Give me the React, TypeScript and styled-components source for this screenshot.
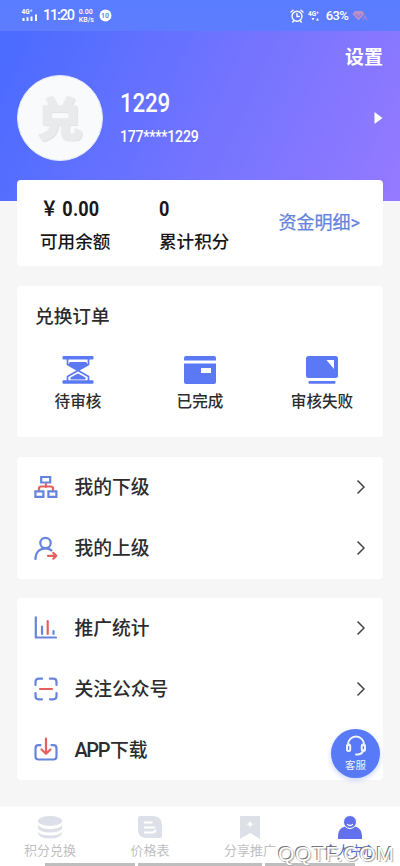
import React from "react";
import styled, { createGlobalStyle } from "styled-components";

const Global = createGlobalStyle`
  * { box-sizing: border-box; }
  body { margin: 0; background: #f6f6f6; }
`;

const Screen = styled.div`
  width: 400px;
  height: 866px;
  overflow: hidden;
  display: flex;
  flex-direction: column;
  background: #f6f6f6;
  color: #2c2c2e;
  font-family: Roboto, "Noto Sans CJK SC", sans-serif;
  white-space: nowrap;
`;

const StatusBar = styled.div`
  flex: none;
  height: 31px;
  padding: 0 32px 0 21px;
  display: flex;
  align-items: center;
  justify-content: space-between;
  color: #fff;
  background: linear-gradient(180deg, #5a7cff, #5d7dfe);
`;

const StatusGroup = styled.div<{ $gap: number }>`
  display: flex;
  align-items: center;
  gap: ${(p) => p.$gap}px;
`;

const Clock = styled.span`
  font-size: 14.5px;
  font-weight: 500;
  letter-spacing: -1.2px;
  line-height: 31px;
`;

const Battery = styled.span`
  font-size: 13px;
  font-weight: 500;
  letter-spacing: -0.7px;
  line-height: 31px;
`;

const TinyStack = styled.div`
  display: flex;
  flex-direction: column;
  font-size: 7px;
  font-weight: 500;
  line-height: 8px;
`;

const Header = styled.header`
  flex: none;
  height: 170px;
  padding: 15px 17px 0;
  color: #fff;
  background: linear-gradient(115deg, #4c6cff 5%, #6f73ff 48%, #957aff 100%);
`;

const Settings = styled.div`
  text-align: right;
  font-size: 19px;
  font-weight: 700;
  line-height: 22px;
  height: 22px;
  margin-top: 1px;
`;

const Profile = styled.div`
  display: flex;
  align-items: center;
  height: 86px;
  margin-top: 6px;
`;

const Avatar = styled.div`
  width: 86px;
  height: 86px;
  border-radius: 50%;
  border: 1px solid #dfe7ff;
  background: #f9fafb;
  color: #e9eaec;
  display: flex;
  align-items: center;
  justify-content: center;
  padding-top: 4px;
  font-size: 46px;
  font-weight: 900;
  line-height: 50px;
  -webkit-text-stroke: 1px #e9eaec;
  text-shadow: 1px 1px 1px #d9dadd, -1px -1px 1px #f2f2f2;
`;

const Identity = styled.div`
  flex: 1;
  margin-left: 17px;
`;

const Name = styled.div`
  font-size: 26px;
  font-weight: 500;
  letter-spacing: -0.2px;
  line-height: 30px;
  transform: scaleX(0.86);
  transform-origin: left;
`;

const Phone = styled.div`
  margin-top: 5px;
  font-size: 17px;
  font-weight: 500;
  letter-spacing: -0.3px;
  line-height: 26px;
  transform: scaleX(0.83);
  transform-origin: left;
`;

const Body = styled.main`
  flex: none;
  height: 626px;
  margin-top: -21px;
  padding: 0 17px;
  display: flex;
  flex-direction: column;
`;

const Card = styled.section<{ $h: number; $gap?: number }>`
  flex: none;
  height: ${(p) => p.$h}px;
  margin-top: ${(p) => p.$gap ?? 0}px;
  border-radius: 4px;
  background: #fff;
`;

const Balance = styled(Card)`
  display: grid;
  grid-template-columns: 119px 1fr auto;
  padding: 16px 23px 0 23px;
  color: #171717;
`;

const Amount = styled.div`
  font-size: 21px;
  font-weight: 700;
  letter-spacing: 0.2px;
  line-height: 27px;
  height: 27px;
  transform: scaleX(0.86);
  transform-origin: left;
`;

const Yen = styled.span`
  display: inline-block;
  width: 25px;
  font-size: 20px;
  margin-left: 1px;
  line-height: 20px;
`;

const AmountLabel = styled.div`
  margin-top: 6px;
  font-size: 17.6px;
  font-weight: 500;
  line-height: 26px;
`;

const Detail = styled.a`
  margin-top: 14px;
  font-size: 18px;
  line-height: 26px;
  font-weight: 400;
  -webkit-text-stroke: 0.25px currentColor;
  color: #6483dc;
`;

const CardTitle = styled.h2`
  margin: 0;
  padding: 17px 18px 0;
  font-size: 18.7px;
  font-weight: 500;
  line-height: 28px;
`;

const Orders = styled.div`
  display: grid;
  grid-template-columns: repeat(3, 1fr);
  margin-top: 23px;
`;

const Order = styled.div`
  display: flex;
  flex-direction: column;
  align-items: center;
  font-size: 15.6px;
  font-weight: 500;
  line-height: 24px;
  svg { display: block; margin-bottom: 4px; }
`;

const Row = styled.div`
  height: 60.6px;
  display: flex;
  align-items: center;
  padding: 0 17px;
  font-size: 18.8px;
  font-weight: 500;
  line-height: 28px;
  svg { flex: none; display: block; }
`;

const RowLabel = styled.span`
  flex: 1;
  margin-left: 16.5px;
  padding-top: 2px;
`;

const Latin = styled.span`
  letter-spacing: -1.4px;
  margin-right: 1px;
  font-size: 20px;
`;

const Service = styled.button`
  position: absolute;
  left: 331px;
  top: 729px;
  width: 49px;
  height: 49px;
  padding: 6px 0 0;
  border: 0;
  border-radius: 50%;
  display: flex;
  flex-direction: column;
  align-items: center;
  background: #587af6;
  box-shadow: 0 2px 5px #587af655;
  color: #eef2ff;
  font: 400 10.5px/16px "Noto Sans CJK SC", sans-serif;
`;

const Nav = styled.nav`
  flex: none;
  height: 60px;
  padding-top: 7px;
  display: grid;
  grid-template-columns: repeat(4, 1fr);
  background: #fff;
  border-top: 1px solid #fbfbfb;
`;

const Tab = styled.div<{ $active?: boolean }>`
  display: flex;
  flex-direction: column;
  align-items: center;
  font-size: 13px;
  line-height: 18px;
  color: ${(p) => (p.$active ? "#4c65d8" : "#bfc0c2")};
  svg { display: block; margin-bottom: 2px; }
`;

const HomeBars = styled.div`
  position: absolute;
  left: 45px;
  top: 863px;
  width: 310px;
  height: 3px;
  display: grid;
  grid-template-columns: 90px 124px 90px;
  gap: 3px;
`;

const HomeBar = styled.i`
  background: #bebebe;
`;

const Watermark = styled.div`
  position: absolute;
  left: 278px;
  top: 842px;
  font: 400 21px/23px "Liberation Sans", sans-serif;
  letter-spacing: 0.7px;
  color: #fff;
  white-space: nowrap;
  text-shadow: -1px -1px 0 #777, 1px 1px 1px #aaa;
`;

const BLUE = "#5b79f5";
const LINE = "#6684dc";
const RED = "#e3605f";

const Chevron = () => (
  <svg width="10" height="16" viewBox="0 0 10 16" fill="none" stroke="#454545" strokeWidth="1.5">
    <path d="M1.5 1.5 8 8l-6.5 6.5" />
  </svg>
);

const lineIcons: Record<string, React.ReactNode> = {
  tree: (
    <>
      <path stroke={RED} d="M12 9v3M5 15v-1.5q0-2 2-2h10q2 0 2 2V15" />
      <path strokeLinejoin="miter" d="M7.2 2h9v5.5h-9zM1.4 16.3h8v5.6h-8zM14.4 16.3h8v5.6h-8z" />
    </>
  ),
  person: (
    <>
      <circle cx="11.5" cy="7" r="5.2" />
      <path d="M1.5 23c0-6 3.5-10.5 10-10.6 2.5 0 4.5.8 6 2" />
      <path stroke={RED} d="M14 19.8h8M19.3 16.9l3 2.9-3 2.9" />
    </>
  ),
  chart: (
    <>
      <path d="M1.8 1.3v20.2H22M8 18v-7.500M19.500 18v-3" />
      <path stroke={RED} d="M13.7 18V5" />
    </>
  ),
  scan: (
    <>
      <path d="M1.5 8V5q0-3.3 3.3-3.3H8M16 1.7h3.3q3.2 0 3.2 3.3v3M22.500 16v3q0 3.300-3.200 3.300H16M8 22.300H4.800Q1.500 22.300 1.500 19v-3" />
      <path stroke={RED} d="M6 12h12" />
    </>
  ),
  download: (
    <>
      <path d="M6.500 8.200H4.500q-3 0-3 3v8.300q0 3 3 3h15q3 0 3-3v-8.300q0-3-3-3h-2" />
      <path stroke={RED} d="M12 1.500v15M7.500 12.500l4.500 4.300 4.500-4.300" />
    </>
  ),
};

const LineIcon = ({ name }: { name: string }) => (
  <svg width="24" height="24" viewBox="0 0 24 24" fill="none" stroke={LINE} strokeWidth="2.200" strokeLinecap="round" strokeLinejoin="round">
    {lineIcons[name]}
  </svg>
);

const MenuRow = ({ icon, label, last }: { icon: string; label: React.ReactNode; last?: boolean }) => (
  <Row>
    <LineIcon name={icon} />
    <RowLabel>{label}</RowLabel>
    {!last && <Chevron />}
  </Row>
);

const SignalIcon = () => (
  <svg width="17" height="15" viewBox="0 0 17 15" fill="#fff">
    <text x="0.500" y="5.700" fontSize="6.500" fontWeight="700" fontFamily="Roboto">4G⁺</text>
    <path d="M1.500 10h2v3h-2zM5.500 9.300h2V13h-2zM9.500 8.500h2V13h-2zM14 6.500h2V13h-2z" />
  </svg>
);

const AlarmIcon = () => (
  <svg width="14" height="14" viewBox="0 0 14 14" fill="none" stroke="#fff" strokeWidth="1.400" strokeLinecap="round">
    <circle cx="7" cy="7.300" r="5" />
    <path d="M7 4.500v3h2.300M1 3l2-1.800M13 3l-2-1.800M3.500 12l-.8 1M10.500 12l.8 1" />
  </svg>
);

const DataIcon = () => (
  <svg width="14" height="12" viewBox="0 0 14 12" fill="#fff">
    <text x="0" y="5.600" fontSize="6.500" fontWeight="700" fontFamily="Roboto">4G⁺</text>
    <path d="M3.500 8h3L5 10.500zM8 10.500h3L9.500 8z" />
  </svg>
);

const DiamondIcon = () => (
  <svg width="16" height="12" viewBox="0 0 16 12">
    <path fill="#b98fc8" d="M3 1h7l2.500 3-6 6.500L.500 4z" />
    <path fill="none" stroke="#8375d4" d="M3.500 4 6.500 7l3-3" />
    <path fill="none" stroke="#9a86df" strokeWidth="1.200" d="m11 10 2-4 2 4.500" />
  </svg>
);

export default function App() {
  return (
    <Screen>
      <Global />
      <StatusBar>
        <StatusGroup $gap={5}>
          <SignalIcon />
          <Clock>11:20</Clock>
          <TinyStack>
            <span>0.00</span>
            <span>KB/s</span>
          </TinyStack>
          <svg width="13" height="13" viewBox="0 0 13 13">
            <circle cx="6.500" cy="6.500" r="6" fill="#fff" />
            <text x="2" y="9" fontSize="7" fontWeight="700" fontFamily="Roboto" fill="#6c86ee">10</text>
          </svg>
        </StatusGroup>
        <StatusGroup $gap={4}>
          <AlarmIcon />
          <DataIcon />
          <Battery>63%</Battery>
          <DiamondIcon />
        </StatusGroup>
      </StatusBar>
      <Header>
        <Settings>设置</Settings>
        <Profile>
          <Avatar>兑</Avatar>
          <Identity>
            <Name>1229</Name>
            <Phone>177****1229</Phone>
          </Identity>
          <svg width="9" height="14" viewBox="0 0 9 14">
            <path fill="#fff" d="M.5 1v12L8.500 7z" />
          </svg>
        </Profile>
      </Header>
      <Body>
        <Balance $h={86}>
          <div>
            <Amount><Yen>￥</Yen>0.00</Amount>
            <AmountLabel>可用余额</AmountLabel>
          </div>
          <div>
            <Amount>0</Amount>
            <AmountLabel>累计积分</AmountLabel>
          </div>
          <Detail>资金明细&gt;</Detail>
        </Balance>
        <Card $h={151} $gap={20}>
          <CardTitle>兑换订单</CardTitle>
          <Orders>
            <Order>
              <svg width="32" height="32" viewBox="0 0 32 32" fill={BLUE}>
                <rect x="0.500" y="2" width="31" height="3.600" rx="1" />
                <rect x="0.500" y="26.200" width="31" height="3.600" rx="1" />
                <path d="M8 8h16l2 2.500L16 16 6 10.500zM8.500 25.500v-2L16 19.500l7.500 4v2z" />
                <path fill="none" stroke={BLUE} strokeWidth="1.700" d="M5.500 5v5.500L16 16.500l10.500-6V5M5.500 27v-4.500L16 16.500l10.500 6V27" />
              </svg>
              待审核
            </Order>
            <Order>
              <svg width="32" height="32" viewBox="0 0 32 32" fill={BLUE}>
                <path d="M0 6.500V4q0-2 2-2h28q2 0 2 2v2.500z" />
                <path fillRule="evenodd" d="M0 9.500h32V28q0 2-2 2H2q-2 0-2-2zM17 14v5h10v-5z" />
              </svg>
              已完成
            </Order>
            <Order>
              <svg width="32" height="32" viewBox="0 0 32 32" fill={BLUE}>
                <path fillRule="evenodd" d="M2.500 2h27q2.500 0 2.500 2.500v17q0 2.500-2.500 2.500h-27Q0 24 0 21.500v-17Q0 2 2.500 2zM20.500 6 28 15V6z" />
                <rect x="2.500" y="27" width="27" height="2.800" rx="1" />
              </svg>
              审核失败
            </Order>
          </Orders>
        </Card>
        <Card $h={122} $gap={20}>
          <MenuRow icon="tree" label="我的下级" />
          <MenuRow icon="person" label="我的上级" />
        </Card>
        <Card $h={182} $gap={19}>
          <MenuRow icon="chart" label="推广统计" />
          <MenuRow icon="scan" label="关注公众号" />
          <MenuRow icon="download" label={<><Latin>APP</Latin>下载</>} last />
        </Card>
      </Body>
      <Service>
        <svg width="22" height="22" viewBox="0 0 22 22" fill="none" stroke="#f0f4ff" strokeWidth="2" strokeLinecap="round">
          <path d="M3 10.500V9.500a8 8 0 0 1 16 0v1M18.500 15q-1 4-5.500 4.500h-2" />
          <rect x="2" y="9.500" width="3.200" height="6.500" rx="1.500" />
          <rect x="16.800" y="9.500" width="3.200" height="6.500" rx="1.500" />
        </svg>
        客服
      </Service>
      <Nav>
        <Tab>
          <svg width="26" height="26" viewBox="0 0 26 26" fill="#dde0e8">
            <ellipse cx="13" cy="7" rx="12" ry="5" />
            <path d="M1 11q2.500 4 12 4t12-4v3.500q-2.500 4-12 4t-12-4zM1 18q2.500 3.500 12 3.500T25 18v1.500q-2 5-12 5t-12-5z" />
          </svg>
          积分兑换
        </Tab>
        <Tab>
          <svg width="26" height="26" viewBox="0 0 26 26">
            <path fill="#dde0e8" d="M3 2h14q8 1 8 9v11q0 2-2 2H9q-8-1-8-8V4q0-2 2-2z" />
            <path fill="none" stroke="#fff" strokeWidth="1.800" d="M7 8.500h8.500M7 13.500h11M7 18.500h8.500q3 0 3-3" />
          </svg>
          价格表
        </Tab>
        <Tab>
          <svg width="26" height="26" viewBox="0 0 26 26">
            <path fill="#dde0e6" d="M3 2h20v23l-10-6-10 6z" />
            <path fill="#fff" d="m13 7 1.200 2.300L16.500 10l-2.300 1.200L13 13.500l-1.200-2.300L9.500 10l2.300-.7z" />
          </svg>
          分享推广
        </Tab>
        <Tab $active>
          <svg width="26" height="26" viewBox="0 0 26 26" fill="#6270ed">
            <path d="M1 25v-3q0-8 7-9.500 5 4 10 0 7 1.500 7 9.500v3z" />
            <circle cx="13" cy="8" r="6.500" stroke="#fff" strokeWidth="1" />
            <path fill="none" stroke="#fff" strokeWidth="1.300" strokeLinecap="round" d="M10.500 10.500q2.500 2 5 0" />
          </svg>
          个人中心
        </Tab>
      </Nav>
      <HomeBars>
        <HomeBar />
        <HomeBar />
        <HomeBar />
      </HomeBars>
      <Watermark>QQTF.COM</Watermark>
    </Screen>
  );
}
